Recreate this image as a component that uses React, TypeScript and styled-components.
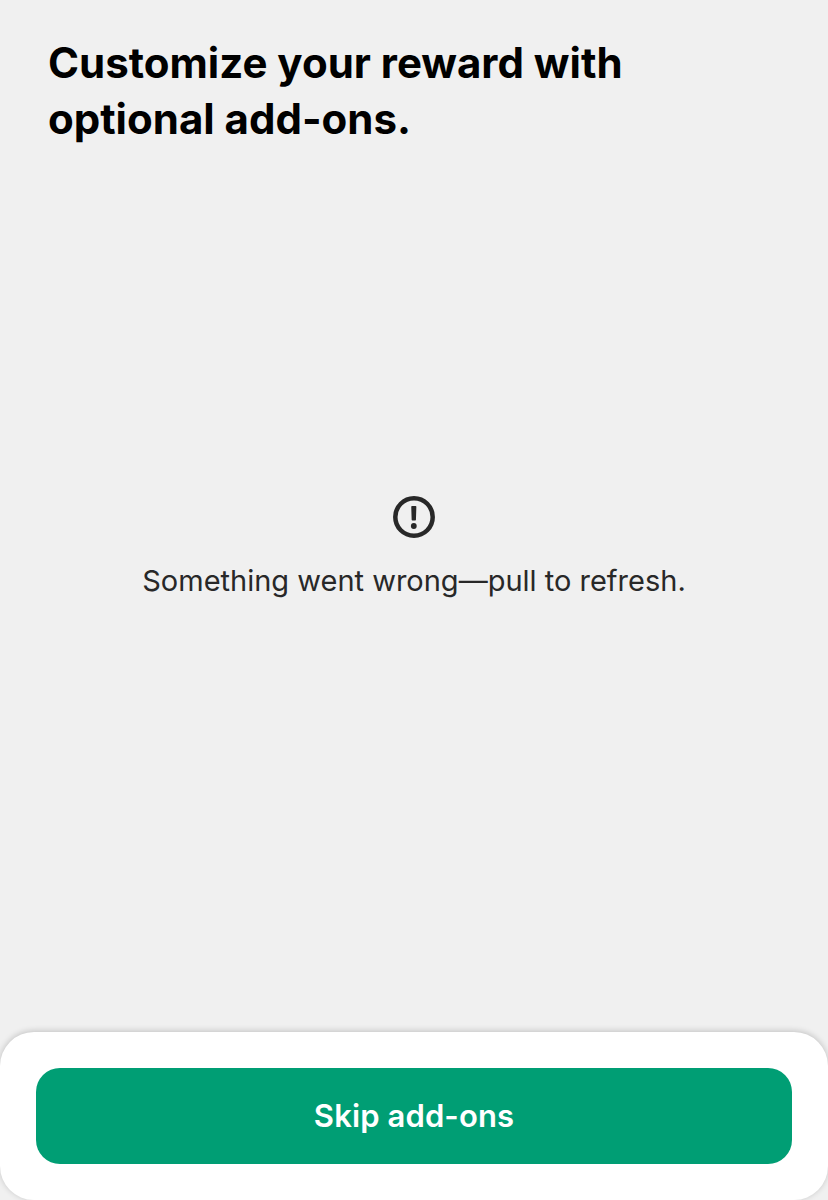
import React from "react";
import styled, { createGlobalStyle } from "styled-components";

const GlobalStyle = createGlobalStyle`
  * { box-sizing: border-box; }
  body { margin: 0; background: #f0f0f0; }
`;

const Screen = styled.div`
  width: 828px;
  height: 1200px;
  display: flex;
  flex-direction: column;
  background: #f0f0f0;
  font-family: Inter, "Liberation Sans", sans-serif;
  overflow: hidden;
`;

const Title = styled.h1`
  margin: 0;
  padding: 35px 48px 0;
  font-size: 42px;
  line-height: 56px;
  font-weight: 700;
  color: #000;
`;

const ErrorState = styled.main`
  flex: 1;
  display: flex;
  flex-direction: column;
  align-items: center;
  padding-top: 349px;
  color: #282828;
`;

const AlertIcon = styled.svg`
  display: block;
  width: 42px;
  height: 42px;
`;

const Message = styled.p`
  margin: 25px 0 0;
  font-size: 29px;
  line-height: 36px;
  white-space: nowrap;
`;

const Footer = styled.footer`
  height: 168px;
  padding: 36px;
  background: #fff;
  border-radius: 34px;
  box-shadow: 0 -1px 6px rgba(0, 0, 0, 0.2);
`;

const SkipButton = styled.button`
  display: flex;
  width: 100%;
  height: 96px;
  align-items: center;
  justify-content: center;
  padding: 0 0 1px;
  border: 0;
  border-radius: 24px;
  background: #009e74;
  color: #fff;
  font-family: inherit;
  font-size: 31px;
  font-weight: 600;
  letter-spacing: 0.12px;
`;

export default function App() {
  return (
    <Screen>
      <GlobalStyle />
      <Title>Customize your reward with<br />optional add-ons.</Title>
      <ErrorState>
        <AlertIcon viewBox="0 0 42 42" aria-hidden="true">
          <circle cx="21" cy="21" r="18.7" fill="none" stroke="currentColor" strokeWidth="4.5" />
          <path d="M19 10H22.6Q23.4 10 23.35 10.8L22.95 23.7Q22.9 24.5 22.2 24.5H19.4Q18.7 24.5 18.65 23.7L18.25 10.8Q18.2 10 19 10Z" fill="currentColor" />
          <circle cx="20.8" cy="30" r="2.9" fill="currentColor" />
        </AlertIcon>
        <Message>Something went wrong—pull to refresh.</Message>
      </ErrorState>
      <Footer><SkipButton>Skip add-ons</SkipButton></Footer>
    </Screen>
  );
}
